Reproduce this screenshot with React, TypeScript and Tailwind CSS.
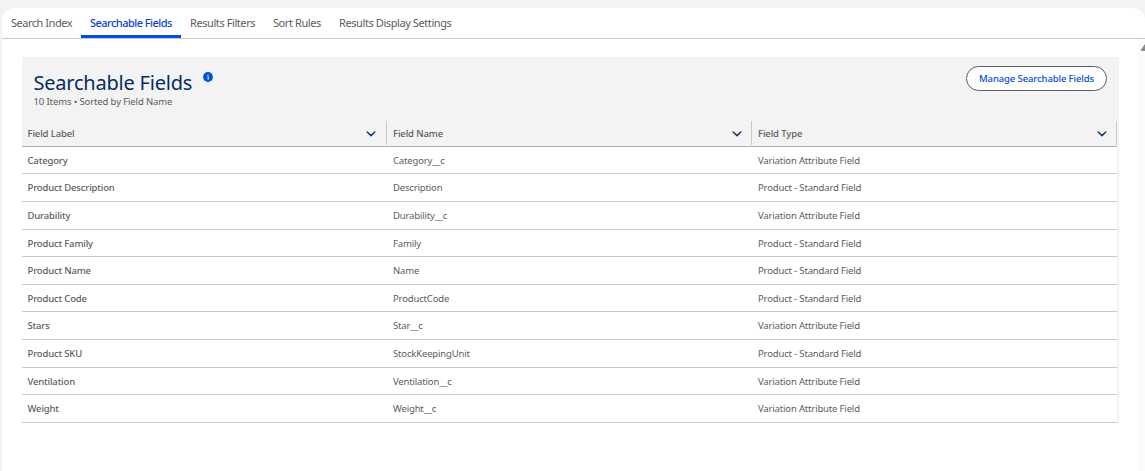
import React from "react";

const tabs = [
  { label: "Search Index", width: "w-[61px]", tracking: "tracking-[-0.48px]" },
  { label: "Searchable Fields", width: "w-[82px]", tracking: "tracking-[-0.53px]", active: true },
  { label: "Results Filters", width: "w-[65px]", tracking: "tracking-[-0.42px]" },
  { label: "Sort Rules", width: "w-[48px]", tracking: "tracking-[-0.42px]" },
  { label: "Results Display Settings", width: "w-[113px]", tracking: "tracking-[-0.41px]" },
];

const columns = [
  { label: "Field Label", spacing: "pl-[5.5px] pr-[10px]" },
  { label: "Field Name", spacing: "pl-[6px] pr-[9px]" },
  { label: "Field Type", spacing: "pl-[6px] pr-[9px]" },
];

const VARIATION = "Variation Attribute Field";
const STANDARD = "Product - Standard Field";

const rows = [
  { label: "Category", name: "Category__c", type: VARIATION, height: "h-[27px]" },
  { label: "Product Description", name: "Description", type: STANDARD, height: "h-[28px]" },
  { label: "Durability", name: "Durability__c", type: VARIATION, height: "h-[28px]" },
  { label: "Product Family", name: "Family", type: STANDARD, height: "h-[27px]" },
  { label: "Product Name", name: "Name", type: STANDARD, height: "h-[28px]" },
  { label: "Product Code", name: "ProductCode", type: STANDARD, height: "h-[27px]" },
  { label: "Stars", name: "Star__c", type: VARIATION, height: "h-[28px]" },
  { label: "Product SKU", name: "StockKeepingUnit", type: STANDARD, height: "h-[28px]" },
  { label: "Ventilation", name: "Ventilation__c", type: VARIATION, height: "h-[27px]" },
  { label: "Weight", name: "Weight__c", type: VARIATION, height: "h-[28px]" },
];

function Chevron() {
  return (
    <svg className="h-[6px] w-[10px]" viewBox="0 0 10 6" fill="none">
      <path d="M1.2 1 L5 4.6 L8.8 1" stroke="#1b3a6b" strokeWidth="1.5" strokeLinecap="round" strokeLinejoin="round" />
    </svg>
  );
}

function InfoIcon() {
  return (
    <svg className="h-[10px] w-[10px]" viewBox="0 0 10 10">
      <circle cx="5" cy="5" r="4.9" fill="#0250d9" />
      <circle cx="5" cy="3.1" r="0.7" fill="#fff" />
      <path d="M4.4 4.6 H5.3 V7 M4.3 7 H6" stroke="#fff" strokeWidth="0.8" fill="none" />
    </svg>
  );
}

export default function App() {
  return (
    <div className="flex h-[471px] w-[1145px] flex-col overflow-hidden bg-[#f3f3f3] pt-[8px] pl-[2px] font-['Noto_Sans','Open_Sans',sans-serif] text-[#5c5c5c]">
      <div className="flex min-h-0 flex-1 flex-col overflow-hidden rounded-t-[12px] bg-white">
        <nav className="flex h-[31px] shrink-0 border-b border-[#c9c9c9]">
          {tabs.map((t) => (
            <div
              key={t.label}
              className={
                "box-content -mb-px flex h-[30px] items-center px-[9px] text-[11px] whitespace-nowrap " +
                t.width + " " + t.tracking +
                (t.active ? " relative text-[#0d3fd0] font-medium after:absolute after:inset-x-0 after:bottom-0 after:h-[3px] after:bg-[#0250d9]" : "")
              }
            >
              {t.label}
            </div>
          ))}
        </nav>
        <div className="flex min-h-0 flex-1">
          <main className="min-w-0 flex-1 pt-[18px] pl-[20px]">
            <section className="w-[1097px] bg-[#f3f3f3]">
              <header className="flex h-[64px] justify-between pr-[12px] pl-[11.5px]">
                <div className="pt-[12px]">
                  <div className="flex">
                    <h1 className="w-[169.5px] text-[20px] leading-[27px] tracking-[-0.22px] whitespace-nowrap text-[#032d60]">Searchable Fields</h1>
                    <span className="pt-[3px]"><InfoIcon /></span>
                  </div>
                  <p className="text-[9.5px] leading-[12px] tracking-[-0.12px] whitespace-nowrap">10 Items • Sorted by Field Name</p>
                </div>
                <button className="mt-[9px] flex h-[25px] w-[141px] items-center justify-center rounded-full border border-[#5c5c5c] bg-white pt-[2px] text-[9.5px] font-medium tracking-[-0.12px] whitespace-nowrap text-[#0250d9]">
                  Manage Searchable Fields
                </button>
              </header>
              <div className="flex h-[26px] w-[1095px] border-b border-[#aeaeae]">
                {columns.map((c) => (
                  <div key={c.label} className={"mb-px flex w-[365px] items-center justify-between border-r border-[#c9c9c9] pt-[2px] text-[9.5px] font-medium tracking-[-0.12px] " + c.spacing}>
                    <span>{c.label}</span>
                    <Chevron />
                  </div>
                ))}
              </div>
              <div className="w-[1095px] bg-white">
                {rows.map((r) => (
                  <div key={r.label} className={"flex items-center border-b border-[#c9c9c9] pt-[2px] text-[9.5px] tracking-[-0.16px] whitespace-nowrap " + r.height}>
                    <div className="w-[365px] pl-[5.5px] font-medium">{r.label}</div>
                    <div className="w-[365px] pl-[6px]">{r.name}</div>
                    <div className="w-[365px] pl-[6px]">{r.type}</div>
                  </div>
                ))}
              </div>
            </section>
          </main>
          <aside className="w-[7px] bg-[#fcfcfc] pt-[5px] pl-[3px]">
            <svg className="h-[7px] w-[4px]" viewBox="0 0 4 7">
              <path d="M0 7 V5.5 L4 0 V7 Z" fill="#8b8b8b" />
            </svg>
          </aside>
        </div>
      </div>
    </div>
  );
}
